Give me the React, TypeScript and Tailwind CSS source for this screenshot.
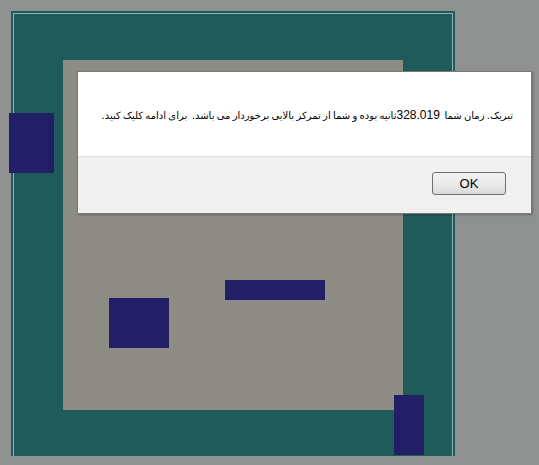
import React from "react";

// blue blocks on the playing field (free canvas, positioned by coordinates)
const blocks = [
  { id: 1, cls: "left-[9px] top-[113px] w-[45px] h-[60px]" },
  { id: 2, cls: "left-[109px] top-[298px] w-[60px] h-[50px]" },
  { id: 3, cls: "left-[225px] top-[280px] w-[100px] h-[20px]" },
  { id: 4, cls: "left-[394px] top-[395px] w-[30px] h-[60px]" },
];

export default function App() {
  return (
    <div className="relative w-[539px] h-[465px] overflow-hidden bg-[#8f9090] font-['Liberation_Sans',Arial,sans-serif]">
      {/* board */}
      <div className="pl-[11px] pt-[11px]">
        <div className="w-[444px] h-[445px] bg-[#1f5b5a] p-[2px] pb-0">
          <div className="h-full border-t border-l border-r border-[#8fb5ae] pl-[49px] pt-[46px]">
            <div className="w-[340px] h-[350px] bg-[#8d8d86]" />
          </div>
        </div>
      </div>

      {blocks.map((b) => (
        <div key={b.id} className={`absolute bg-[#221f66] ${b.cls}`} />
      ))}

      {/* alert dialog */}
      <div className="absolute left-[77px] top-[71px] w-[455px] h-[143px] flex flex-col border border-[#7a7a7a] bg-white shadow-[1px_1px_2px_rgba(0,0,0,0.25)]">
        <div className="h-[85px] flex items-center pr-[18px] pl-2 pt-[2px] border-b border-[#dfdfdf]">
          <p
            dir="rtl"
            className="w-full whitespace-pre text-[10px] leading-none [word-spacing:-0.9px] text-black font-['DejaVu_Sans','Liberation_Sans',sans-serif]"
          >
            {"تبریک. زمان شما  "}
            <span className="font-['Liberation_Sans',Arial,sans-serif] text-[12px] [word-spacing:normal]">328.019</span>
            {"ثانیه بوده و شما از تمرکز بالایی برخوردار می باشد.  برای ادامه کلیک کنید."}
          </p>
        </div>
        <div className="flex-1 bg-[#f0f0f0] flex justify-end items-start pt-[15px] pr-[25px]">
          <button className="w-[74px] h-[23px] rounded-[3px] border border-[#707070] bg-gradient-to-b from-[#f2f2f2] via-[#ebebeb] to-[#d9d9d9] text-[13px] text-black leading-none">
            OK
          </button>
        </div>
      </div>
    </div>
  );
}
